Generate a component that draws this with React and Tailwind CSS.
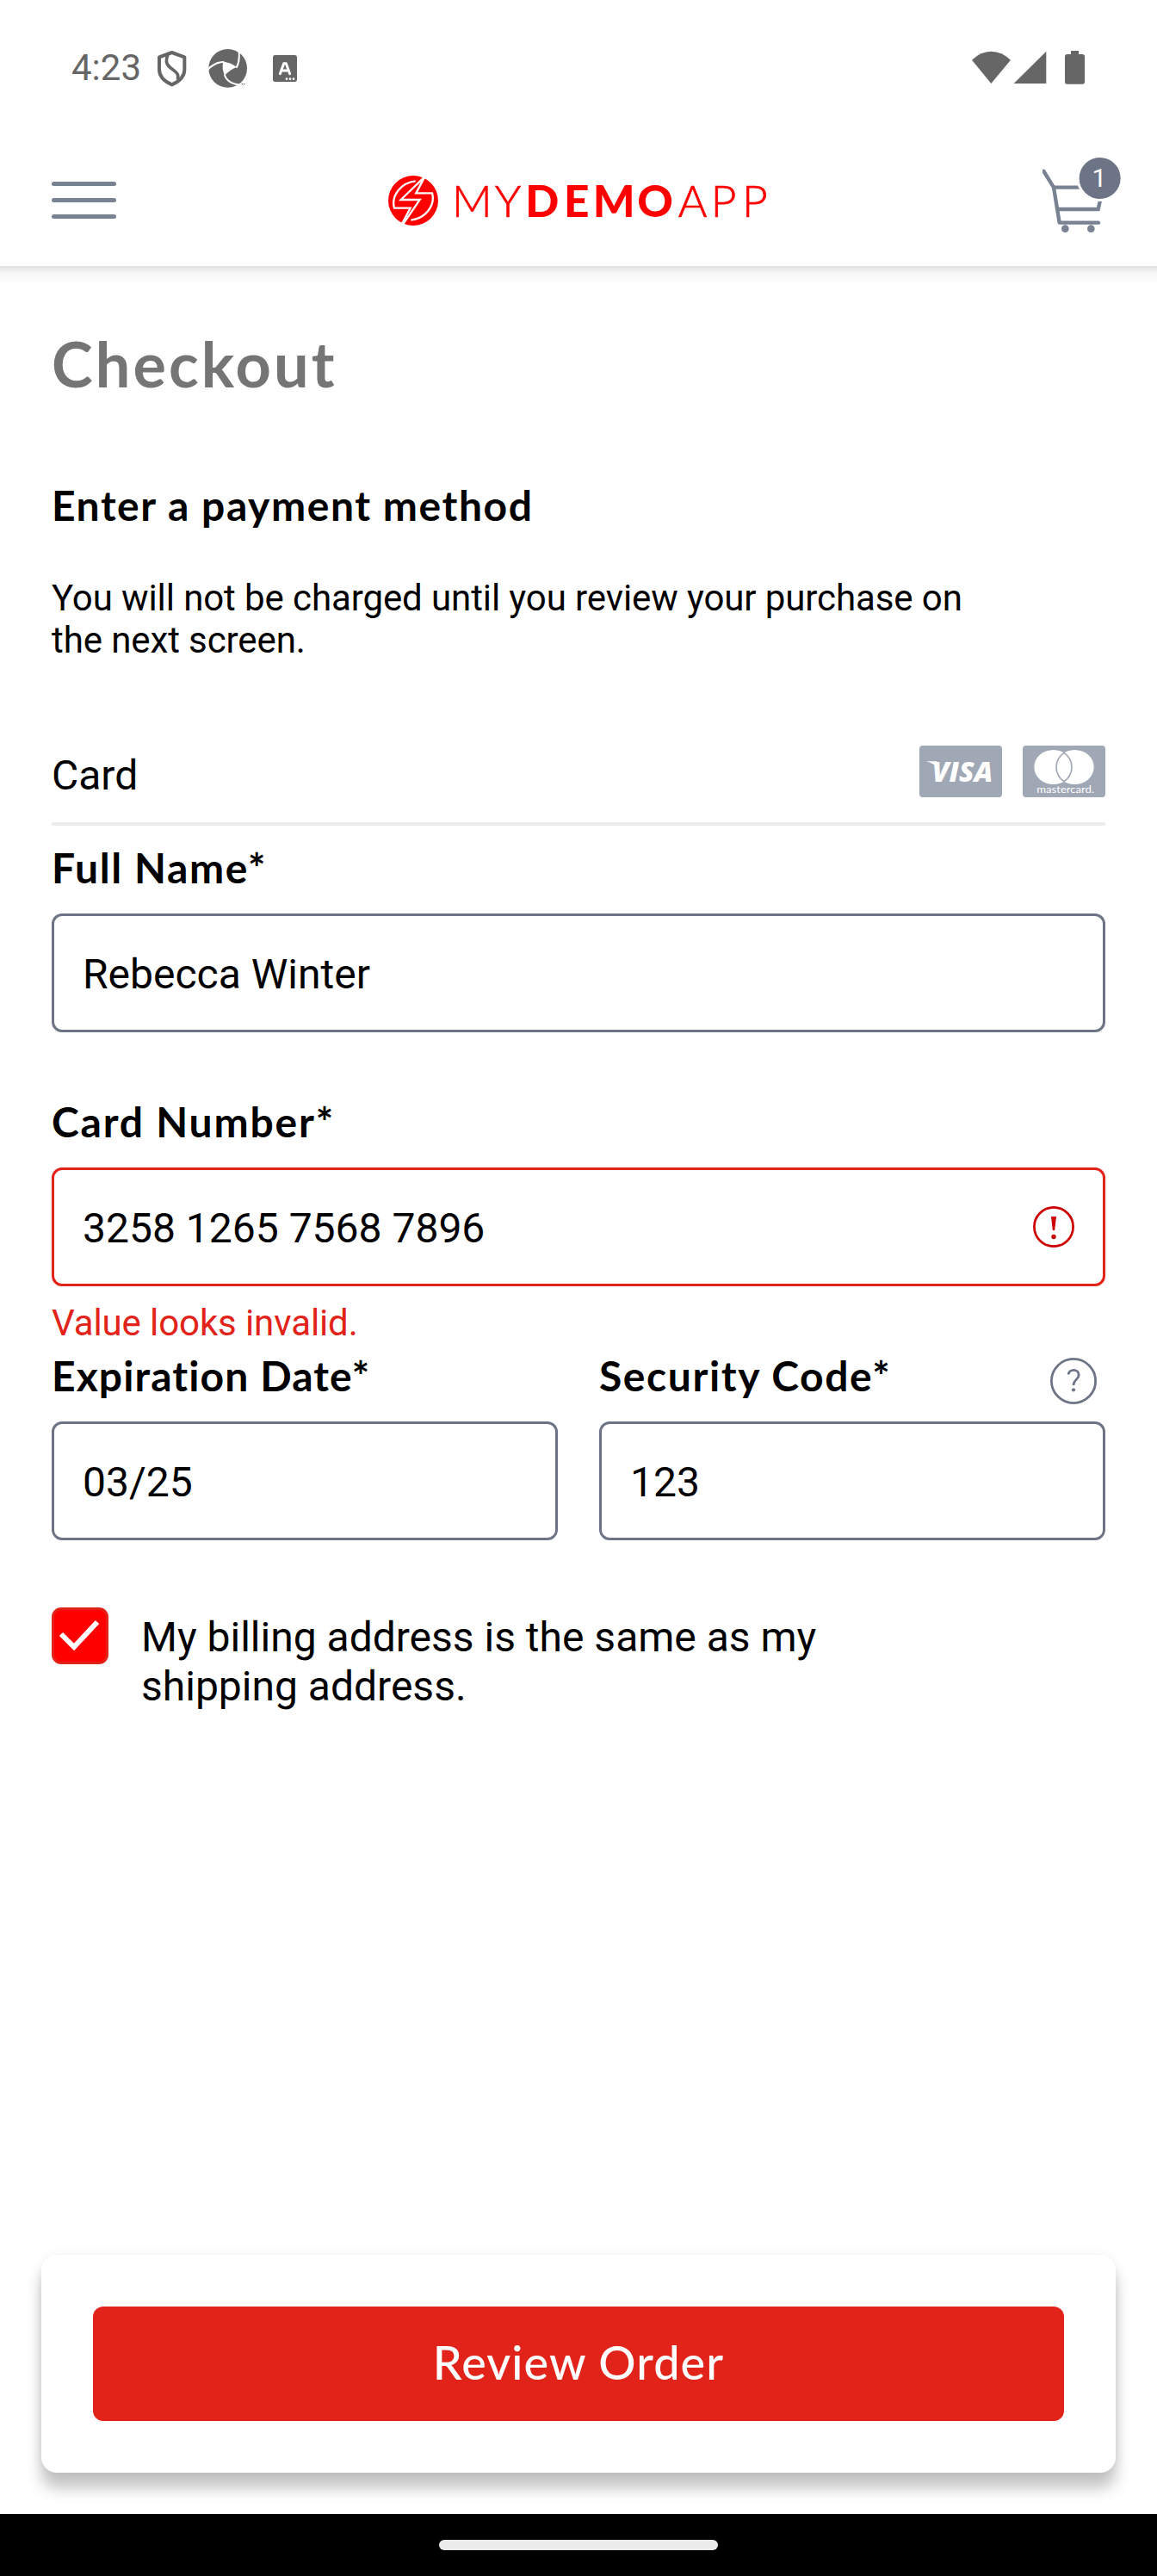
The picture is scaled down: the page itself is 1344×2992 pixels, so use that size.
import React, { useState } from "react";

const LATO = "font-['Lato','Open_Sans',sans-serif]";

function StatusBar() {
  return (
    <div className="flex h-[159px] items-start justify-between pl-[83px] pr-[84px] text-[#666666]">
      <div className="flex">
        <span className="mt-[54px] w-[97px] text-[42px] leading-[50px]">4:23</span>
        <svg className="ml-[2px] mt-[58px] h-[43px] w-[36px]" viewBox="364 54 108 129" fill="none" stroke="currentColor">
          <path d="M417 63 L373 79 V122 C373 146 392 164 417 175 C442 164 461 146 461 122 V79 Z" strokeWidth="12" strokeLinejoin="round" />
          <path d="M403 70 C392 98 400 108 420 122 C434 132 442 140 437 158" strokeWidth="11" />
        </svg>
        <svg className="ml-[22px] mt-[56px] h-[48px] w-[48px]" viewBox="540 48 144 144">
          <circle cx="614" cy="118" r="67" fill="currentColor" />
          <path d="M598 95 Q626 98 645 114 Q620 124 603 143 Q592 118 598 95Z" fill="#fff" />
          <g fill="none" stroke="#fff" strokeWidth="6" strokeLinecap="round">
            <path d="M545 122 Q568 97 599 96" />
            <path d="M645 114 Q658 88 651 48" />
            <path d="M603 142 Q616 176 668 176" />
          </g>
          <path d="M662 173 h12" stroke="currentColor" strokeWidth="4" strokeDasharray="4 3" />
        </svg>
        <svg className="ml-[29px] mt-[64px] h-[31px] w-[28px]" viewBox="771 72 84 93">
          <rect x="771" y="72" width="84" height="93" rx="8" fill="currentColor" />
          <path d="M796 137 L809 101 H817 L830 137 M802 126 H824" stroke="#fff" strokeWidth="9" strokeLinecap="round" strokeLinejoin="round" fill="none" />
          <circle cx="819" cy="155" r="4" fill="#fff" />
          <circle cx="831" cy="155" r="4" fill="#fff" />
          <circle cx="843" cy="155" r="4" fill="#fff" />
        </svg>
      </div>
      <svg className="mt-[58px] h-[40px] w-[131px]" viewBox="87 54 393 120" fill="currentColor">
        <path d="M154 171 L87 89 Q117 59 154 59 Q191 59 222 89 Z" />
        <path d="M346 59 V171 H233 Z" />
        <path d="M432 57 H459 V69 H472 Q480 69 480 77 V165 Q480 173 472 173 H419 Q411 173 411 165 V77 Q411 69 419 69 H432 Z" />
      </svg>
    </div>
  );
}

function Logo() {
  return (
    <svg className="h-[110px] w-[480px]" viewBox="0 0 1440 330" aria-label="My Demo App">
      <circle cx="150" cy="159" r="87" fill="#ff0000" />
      <g fill="none" stroke="#fff" strokeWidth="7">
        <path d="M190 76 L160 133 H216 C228 176 192 222 142 227" />
        <path d="M110 242 L140 185 H84 C72 142 108 96 158 91" />
        <path d="M190 76 L107 156 H173 L114 242" />
      </g>
      <g fill="#ff0000" fontFamily="Lato, 'Open Sans', sans-serif" fontSize="154">
        <text y="215" fontWeight="300" stroke="#ff0000" strokeWidth="2" x="285 434">MY</text>
        <text y="215" fontWeight="900" x="541 675 776 931">DEMO</text>
        <text y="215" fontWeight="300" stroke="#ff0000" strokeWidth="2" x="1073 1187 1296">APP</text>
      </g>
    </svg>
  );
}

function Header() {
  return (
    <header className="flex h-[150px] items-start bg-white px-[60px]">
      <div className="mt-[52px] flex w-[75px] flex-col gap-[14px]">
        <span className="h-[5px] rounded-full bg-[#788293]" />
        <span className="h-[5px] rounded-full bg-[#788293]" />
        <span className="h-[5px] rounded-full bg-[#788293]" />
      </div>
      <div className="ml-[295px] mt-[21px]">
        <Logo />
      </div>
      <div className="relative ml-auto mr-[-19px] mt-[22px] h-[90px] w-[92px]">
        <svg className="h-[90px] w-[92px]" viewBox="94 33 276 270" fill="none" stroke="#788293" strokeWidth="13">
          <path d="M98 86 L133 143 L153 266 H289" strokeLinecap="round" strokeLinejoin="round" />
          <path d="M133 143 H305 L288 219 H148" />
          <circle cx="173" cy="287" r="13" fill="#788293" stroke="none" />
          <circle cx="263" cy="287" r="13" fill="#788293" stroke="none" />
          <circle cx="294" cy="111" r="81" fill="#fff" stroke="none" />
          <circle cx="294" cy="111" r="72" fill="#6c7486" stroke="none" />
        </svg>
        <span className="absolute left-[42px] top-[2px] flex h-[48px] w-[48px] items-center justify-center text-[30px] leading-[48px] text-white">1</span>
      </div>
    </header>
  );
}

function Label({ children, className = "" }) {
  return <label className={`relative top-px block whitespace-nowrap ${LATO} text-[48px] font-bold leading-[58px] ${className}`}>{children}</label>;
}

function Field({ value, error }) {
  return (
    <div className={`mt-[25px] flex h-[138px] items-center justify-between rounded-[12px] border-[3px] pl-[33px] pr-[33px] ${error ? "border-[#e2231a]" : "border-[#6c7486]"}`}>
      <span className="mt-[2px] text-[48px] leading-[57px]">{value}</span>
      {error && (
        <svg className="mt-[-1px] h-[48px] w-[48px]" viewBox="0 0 48 48">
          <circle cx="24" cy="24" r="22.6" fill="none" stroke="#cc0000" strokeWidth="2.7" />
          <path d="M21 12 H27 L25.2 28 H22.8 Z" fill="#cc0000" />
          <circle cx="24" cy="35.5" r="2.7" fill="#cc0000" />
        </svg>
      )}
    </div>
  );
}

function VisaBadge() {
  return (
    <svg className="h-[60px] w-[96px]" viewBox="0 0 288 180">
      <rect width="288" height="180" rx="11" fill="#a0a7b5" />
      <path d="M24 55 H60 L66 80 Q48 60 24 55Z" fill="#fff" />
      <text x="44" y="125" fill="#fff" fontFamily="'Open Sans', sans-serif" fontWeight="800" fontStyle="italic" fontSize="97" textLength="212" lengthAdjust="spacingAndGlyphs">VISA</text>
    </svg>
  );
}

function MastercardBadge() {
  return (
    <svg className="h-[60px] w-[96px]" viewBox="0 0 288 180">
      <rect width="288" height="180" rx="11" fill="#a0a7b5" />
      <ellipse cx="107" cy="75" rx="67" ry="60" fill="#fff" />
      <ellipse cx="181" cy="75" rx="67" ry="60" fill="#fff" />
      <path d="M144 25 C108 50 108 100 144 125 C180 100 180 50 144 25Z" fill="none" stroke="#a0a7b5" strokeWidth="5" />
      <text x="49" y="165" fill="#fff" fontFamily="Lato, sans-serif" fontWeight="400" fontSize="35" textLength="200" lengthAdjust="spacingAndGlyphs">mastercard.</text>
    </svg>
  );
}

export default function App() {
  const [same, setSame] = useState(true);
  return (
    <div className="flex h-[2992px] w-[1344px] flex-col overflow-hidden bg-white font-['Roboto',sans-serif] text-black">
      <StatusBar />
      <Header />
      <div className="h-[22px] shrink-0 bg-linear-to-b from-[#e0e0e0] via-[#f6f6f6] via-35% to-white" />
      <main className="flex flex-1 flex-col px-[60px]">
        <h1 className={`mt-[48px] ${LATO} text-[72px] font-bold leading-[86px] tracking-[3.1px] text-[#757575]`}>Checkout</h1>
        <h2 className={`mt-[93px] ${LATO} text-[48px] font-bold leading-[58px] tracking-[1.55px]`}>Enter a payment method</h2>
        <p className="mt-[54px] w-[1080px] text-[42px] leading-[49px] tracking-[-0.1px]">You will not be charged until you review your purchase on the next screen.</p>
        <div className="mt-[98px] flex h-[93px] items-start justify-between border-b-4 border-[#ececec]">
          <span className="mt-[5px] text-[48px] leading-[60px]">Card</span>
          <div className="flex gap-[24px]">
            <VisaBadge />
            <MastercardBadge />
          </div>
        </div>
        <Label className="mt-[19px] tracking-[1.6px]">Full Name*</Label>
        <Field value="Rebecca Winter" />
        <Label className="mt-[74px] tracking-[1.8px]">Card Number*</Label>
        <Field value="3258 1265 7568 7896" error />
        <p className="mt-[18px] text-[42px] leading-[49px] tracking-[-0.1px] text-[#e2231a]">Value looks invalid.</p>
        <div className="mt-[7px] grid grid-cols-2 gap-[48px]">
          <div>
            <Label className="tracking-[1.1px]">Expiration Date*</Label>
            <Field value="03/25" />
          </div>
          <div>
            <div className="flex h-[58px] items-start justify-between pr-[10px]">
              <Label className="tracking-[1.6px]">Security Code*</Label>
              <svg className="mt-[9px] h-[54px] w-[54px]" viewBox="0 0 54 54" fill="none" stroke="#6c7486">
                <circle cx="27" cy="27" r="25.6" strokeWidth="2.8" />
                <path d="M21.2 19.5 C21.4 12.5 33.2 12.5 33.2 20 C33.2 25 27 25.5 27 32" strokeWidth="2.8" />
                <circle cx="27" cy="37.3" r="2.1" fill="#6c7486" stroke="none" />
              </svg>
            </div>
            <Field value="123" />
          </div>
        </div>
        <div className="mt-[78px] flex items-start">
          <button
            onClick={() => setSame(!same)}
            className="flex h-[66px] w-[66px] items-center justify-center rounded-[11px] border-[3px] border-[#e2231a] bg-[#ff0000]"
          >
            {same && (
              <svg className="h-[60px] w-[60px]" viewBox="0 0 60 60" fill="none" stroke="#fff" strokeWidth="6">
                <path d="M8 28 L23 43 L50 14" />
              </svg>
            )}
          </button>
          <p className="ml-[38px] mt-[6px] w-[860px] text-[48px] leading-[57px]">My billing address is the same as my shipping address.</p>
        </div>
      </main>
      <div className="mx-[48px] mb-[48px] h-[253px] shrink-0 rounded-[18px] bg-white p-[60px] shadow-[0_18px_18px_rgba(0,0,0,0.24),0_0_12px_rgba(0,0,0,0.06)]">
        <button className={`flex h-[133px] w-full items-center justify-center rounded-[12px] bg-[#e2231a] ${LATO} pb-[3px] text-[54px] leading-[64px] font-medium tracking-[1.1px] text-white`}>
          <span>Review Order</span>
        </button>
      </div>
      <div className="flex h-[72px] shrink-0 justify-center bg-black pt-[30px]">
        <span className="h-[12px] w-[324px] rounded-full bg-[#ebebeb]" />
      </div>
    </div>
  );
}
